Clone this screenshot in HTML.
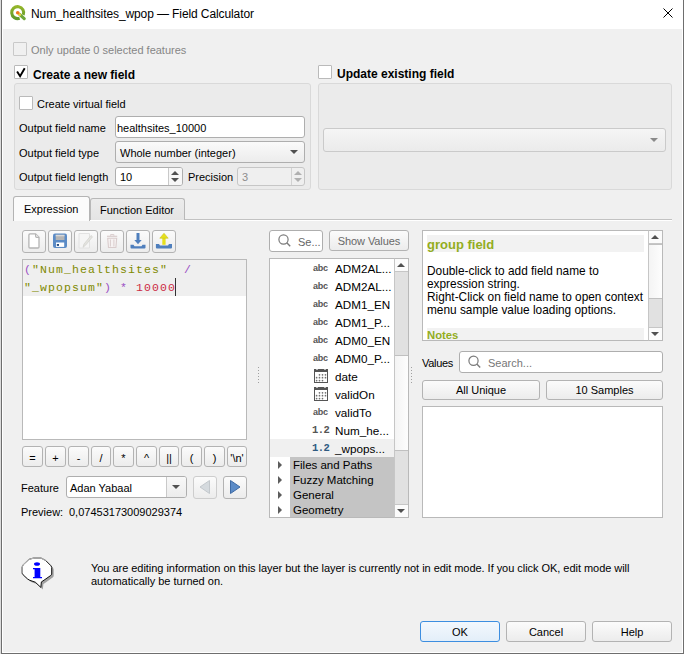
<!DOCTYPE html>
<html><head><meta charset="utf-8">
<style>
*{box-sizing:border-box;margin:0;padding:0}
html,body{width:684px;height:654px;overflow:hidden;background:#dcdcdc}
body{position:relative;font-family:"Liberation Sans",sans-serif;font-size:11px;color:#000}
.a{position:absolute}
.t{position:absolute;white-space:nowrap;line-height:13px}
.cb{position:absolute;width:13px;height:13px;border:1px solid #bababa;border-radius:1px;background:#fff}
.grp{position:absolute;border:1px solid #d9d9d9;border-radius:3px;background:#ebebeb}
.edit{position:absolute;border:1px solid #aeaeae;border-radius:3px;background:#fff}
.combo{position:absolute;border:1px solid #aeaeae;border-radius:3px;background:linear-gradient(#fafafa,#ececec)}
.btn{position:absolute;border:1px solid #b3b3b3;border-radius:3px;background:linear-gradient(#fbfbfb,#ececec);text-align:center}
.tri{position:absolute;width:0;height:0;border-left:4px solid transparent;border-right:4px solid transparent;border-top:4px solid #505050}
.tru{position:absolute;width:0;height:0;border-left:4px solid transparent;border-right:4px solid transparent;border-bottom:4px solid #505050}
.dots{position:absolute;width:1px;height:17px;background:repeating-linear-gradient(#a0a0a0 0 1px,transparent 1px 3px)}
</style></head><body>
<div class="a" style="left:1px;top:0px;width:683px;height:654px;border:1px solid #6e6e6e;border-top:none;background:#f0f0f0"></div>
<div class="a" style="left:2px;top:0px;width:681px;height:653px;border:1px solid #fff;border-top:none;"></div>
<div class="a" style="left:2px;top:0px;width:681px;height:29px;background:#fff"></div>
<svg class="a" style="left:6px;top:2px" width="24" height="24" viewBox="0 0 24 24">
<defs><linearGradient id="qg" x1="0" y1="0" x2="0" y2="1"><stop offset="0" stop-color="#93b52a"/><stop offset="1" stop-color="#5f9a2c"/></linearGradient></defs>
<path d="M13.65 16.27 A6 6 0 1 1 17.22 12.94" fill="none" stroke="url(#qg)" stroke-width="3.1"/>
<path d="M13.6 12.4 L18.2 16.6" stroke="#6fa83a" stroke-width="3.2" stroke-linecap="round"/>
<path d="M12.2 11.2 L14 12.8" stroke="#f0d040" stroke-width="2.4" stroke-linecap="round"/>
<circle cx="11.7" cy="10.8" r="1.8" fill="#f07820"/>
</svg>
<div class="t" style="left:31px;top:7px;font-size:12px;line-height:14px;letter-spacing:-0.1px">Num_healthsites_wpop — Field Calculator</div>
<svg class="a" style="left:662px;top:7px" width="12" height="12" viewBox="0 0 12 12"><path d="M1.5 1.5L10.5 10.5M10.5 1.5L1.5 10.5" stroke="#000" stroke-width="1"/></svg>
<div class="cb" style="left:13px;top:42px;width:14px;height:14px;background:#f0f0f0;border-color:#c9c9c9"></div>
<div class="t" style="left:31px;top:44px;color:#868686">Only update 0 selected features</div>
<div class="cb" style="left:14px;top:65px;width:14px;height:14px;"></div>
<svg class="a" style="left:15px;top:66px" width="12" height="12" viewBox="0 0 12 12"><path d="M2.1 5.6 L5.1 10.2 L9.7 2.2" fill="none" stroke="#000" stroke-width="1.9" stroke-linejoin="miter"/></svg>
<div class="t" style="left:33px;top:68px;font-weight:bold;font-size:12px;line-height:14px">Create a new field</div>
<div class="grp" style="left:14px;top:83px;width:297px;height:107px;"></div>
<div class="cb" style="left:19px;top:96px;width:14px;height:14px;"></div>
<div class="t" style="left:37px;top:98px;">Create virtual field</div>
<div class="t" style="left:19px;top:122px;">Output field name</div>
<div class="edit" style="left:115px;top:116px;width:190px;height:22px;"></div>
<div class="t" style="left:117px;top:122px;">healthsites_10000</div>
<div class="t" style="left:19px;top:147px;">Output field type</div>
<div class="combo" style="left:115px;top:141px;width:190px;height:22px;"></div>
<div class="t" style="left:120px;top:147px;">Whole number (integer)</div>
<div class="tri" style="left:290px;top:150px"></div>
<div class="t" style="left:19px;top:171px;">Output field length</div>
<div class="edit" style="left:115px;top:167px;width:68px;height:19px;"></div>
<div class="a" style="left:168px;top:168px;width:14px;height:17px;border-left:1px solid #c9c9c9;background:#f7f7f7;border-radius:0 2px 2px 0"></div>
<div class="tru" style="left:171px;top:171px"></div><div class="tri" style="left:171px;top:178px"></div>
<div class="t" style="left:120px;top:171px;">10</div>
<div class="t" style="left:188px;top:171px;">Precision</div>
<div class="edit" style="left:237px;top:167px;width:68px;height:19px;background:#efefef;border-color:#c6c6c6"></div>
<div class="a" style="left:291px;top:168px;width:13px;height:17px;border-left:1px solid #d2d2d2"></div>
<div class="tru" style="left:294px;top:171px;border-bottom-color:#b0b0b0"></div><div class="tri" style="left:294px;top:178px;border-top-color:#b0b0b0"></div>
<div class="t" style="left:242px;top:171px;color:#8d8d8d">3</div>
<div class="cb" style="left:318px;top:65px;width:14px;height:14px;"></div>
<div class="t" style="left:337px;top:67px;font-weight:bold;font-size:12px;line-height:14px">Update existing field</div>
<div class="grp" style="left:318px;top:83px;width:354px;height:107px;"></div>
<div class="combo" style="left:323px;top:128px;width:343px;height:24px;border-color:#cacaca;background:linear-gradient(#f5f5f5,#ebebeb)"></div>
<div class="tri" style="left:650px;top:138px;border-top-color:#8a8a8a"></div>
<div class="a" style="left:14px;top:219px;width:658px;height:1px;background:#c2c2c2"></div>
<div class="a" style="left:14px;top:220px;width:658px;height:1px;background:#fff"></div>
<div class="a" style="left:90px;top:198px;width:95px;height:22px;border:1px solid #b8b8b8;border-bottom:none;border-radius:3px 3px 0 0;background:linear-gradient(#ececec,#e4e4e4)"></div>
<div class="t" style="left:100px;top:204px;">Function Editor</div>
<div class="a" style="left:13px;top:196px;width:77px;height:25px;border:1px solid #b4b4b4;border-bottom:none;border-radius:3px 3px 0 0;background:#fbfbfb"></div>
<div class="t" style="left:24px;top:203px;">Expression</div>
<div class="btn" style="left:22px;top:230px;width:24px;height:23px;"></div>
<div class="btn" style="left:48px;top:230px;width:24px;height:23px;"></div>
<div class="btn" style="left:74px;top:230px;width:24px;height:23px;"></div>
<div class="btn" style="left:100px;top:230px;width:24px;height:23px;"></div>
<div class="btn" style="left:126px;top:230px;width:24px;height:23px;"></div>
<div class="btn" style="left:152px;top:230px;width:24px;height:23px;"></div>
<svg class="a" style="left:22px;top:230px" width="160" height="23" viewBox="0 0 160 23">
<path d="M8 3.9 H13.6 L17 7.3 V16.9 Q17 18 15.9 18 H8 Q6.9 18 6.9 16.9 V5 Q6.9 3.9 8 3.9 Z" fill="#fff" stroke="#b4b4b4" stroke-width="1.3"/>
<path d="M13.6 3.9 V6.2 Q13.6 7.3 14.7 7.3 H17" fill="#f0f0f0" stroke="#b4b4b4" stroke-width="1.2"/>
<rect x="31" y="3.5" width="14" height="14.5" rx="2" fill="#5b8bc6"/>
<rect x="33.7" y="4.8" width="8.8" height="5.2" fill="#b4b4b4"/>
<rect x="33.7" y="4.8" width="8.8" height="1.5" fill="#d8d8d8"/>
<rect x="34" y="12.5" width="8.2" height="4.4" fill="#fff"/>
<rect x="34.8" y="14" width="2.2" height="1.9" fill="#284d80"/>
<path d="M57 3.5 H67.5 V18 H57 Z" fill="#f5f5f5" stroke="#e2e2e2"/>
<path d="M61 17.3 L62 14 L69 5.5 L70.5 6.8 L63.5 15.3 Z" fill="#e4e4e0" stroke="#d0d0cc" stroke-width="0.7"/>
<path d="M85 6.3 H95.2" stroke="#d9cccc" stroke-width="1.2"/>
<path d="M88.6 5.7 V4.6 H91.9 V5.7" fill="none" stroke="#d9cccc" stroke-width="1"/>
<path d="M85.7 8.3 H94.7 L93.9 17.5 H86.5 Z" fill="#f6f2f2" stroke="#d9cccc" stroke-width="1.1"/>
<path d="M88.4 9.5 V16.5 M91.9 9.5 V16.5" stroke="#d9cccc" stroke-width="1"/>
<path d="M116 3 V10.5" stroke="#4f7fbd" stroke-width="3"/>
<path d="M112.3 10 H119.7 L116 14.2 Z" fill="#4f7fbd"/>
<path d="M108.5 14.7 H111.5 L112.5 16.2 H119.5 L120.5 14.7 H123.5 V17.6 Q123.5 18.6 122.5 18.6 H109.5 Q108.5 18.6 108.5 17.6 Z" fill="#4f7fbd"/>
<path d="M140.3 7.5 H143.6 V14.8 H140.3 Z" fill="#e6e01c"/>
<path d="M137.8 8.2 L142 3.3 L146.2 8.2 Z" fill="#e6e01c" stroke="#c8c21a" stroke-width="0.6"/>
<path d="M133.9 14.1 H137 L138 15.4 H146 L147 14.1 H150 V17.5 Q150 18.5 149 18.5 H134.9 Q133.9 18.5 133.9 17.5 Z" fill="#4f7fbd"/>
</svg>
<div class="a" style="left:22px;top:259px;width:225px;height:181px;border:1px solid #b9b9b9;background:#fff"></div>
<div class="a" style="left:23px;top:260px;width:223px;height:36px;background:#efefef"></div>
<div class="a" style="left:24px;top:261px;font-family:'Liberation Mono',monospace;font-size:11.5px;letter-spacing:1.1px;line-height:18px;white-space:pre;color:#808a00"><span style="color:#9a4ec4">(</span>"Num_healthsites"  <span style="color:#9a4ec4">/</span>
"_wpopsum"<span style="color:#9a4ec4">)</span> <span style="color:#9a4ec4">*</span> <span style="color:#cc2a44">10000</span></div>
<div class="a" style="left:175px;top:278px;width:1px;height:18px;background:#333"></div>
<div class="btn" style="left:22px;top:446px;width:21px;height:21px;line-height:20px;padding-top:1px">=</div>
<div class="btn" style="left:45px;top:446px;width:21px;height:21px;line-height:20px;padding-top:1px">+</div>
<div class="btn" style="left:68px;top:446px;width:21px;height:21px;line-height:20px;padding-top:1px">-</div>
<div class="btn" style="left:91px;top:446px;width:20px;height:21px;line-height:20px;padding-top:1px">/</div>
<div class="btn" style="left:113px;top:446px;width:21px;height:21px;line-height:20px;padding-top:1px">*</div>
<div class="btn" style="left:136px;top:446px;width:21px;height:21px;line-height:20px;padding-top:1px">^</div>
<div class="btn" style="left:159px;top:446px;width:20px;height:21px;line-height:20px;padding-top:1px">||</div>
<div class="btn" style="left:181px;top:446px;width:21px;height:21px;line-height:20px;padding-top:1px">(</div>
<div class="btn" style="left:204px;top:446px;width:21px;height:21px;line-height:20px;padding-top:1px">)</div>
<div class="btn" style="left:227px;top:446px;width:20px;height:21px;line-height:20px;padding-top:1px">'\n'</div>
<div class="t" style="left:21px;top:482px;">Feature</div>
<div class="combo" style="left:66px;top:476px;width:121px;height:22px;background:#fff"></div>
<div class="a" style="left:166px;top:477px;width:20px;height:20px;border-left:1px solid #c9c9c9;background:linear-gradient(#f8f8f8,#ececec);border-radius:0 2px 2px 0"></div>
<div class="tri" style="left:172px;top:485px"></div>
<div class="t" style="left:70px;top:482px;">Adan Yabaal</div>
<div class="btn" style="left:193px;top:476px;width:24px;height:23px;border-color:#cdcdcd"></div>
<div class="btn" style="left:223px;top:476px;width:24px;height:23px;"></div>
<svg class="a" style="left:193px;top:476px" width="54" height="23" viewBox="0 0 54 23">
<path d="M16.5 4.5 V17.5 L7 11 Z" fill="#d5dade" stroke="#c3c8cc"/>
<path d="M37.5 4.5 V17.5 L47 11 Z" fill="#5b8bc7" stroke="#3e6aa4"/>
</svg>
<div class="t" style="left:21px;top:506px;">Preview:</div>
<div class="t" style="left:69px;top:506px;">0,07453173009029374</div>
<div class="dots" style="left:258px;top:367px"></div>
<div class="dots" style="left:411px;top:367px"></div>
<div class="edit" style="left:269px;top:230px;width:54px;height:22px;"></div>
<svg class="a" style="left:276px;top:232px" width="18" height="18" viewBox="0 0 18 18"><circle cx="7.5" cy="7.5" r="4.6" fill="none" stroke="#7a7a7a" stroke-width="1.2"/><path d="M10.8 10.8 L14.2 14.2" stroke="#7a7a7a" stroke-width="1.4"/></svg>
<div class="t" style="left:298px;top:236px;color:#666">Se...</div>
<div class="btn" style="left:329px;top:230px;width:80px;height:21px;line-height:19px;color:#5e5e5e"></div>
<div class="t" style="left:329px;top:235px;width:80px;text-align:center;color:#686868;letter-spacing:-0.1px">Show Values</div>
<div class="a" style="left:269px;top:258px;width:140px;height:260px;border:1px solid #b9b9b9;background:#fff;overflow:hidden">
<div class="a" style="left:0px;top:180px;width:125px;height:18px;background:#f0f0f0"></div>
<div class="a" style="left:20px;top:198px;width:105px;height:61px;background:#c4c4c4"></div>
</div>
<div class="t" style="left:335px;top:261px;font-size:11.7px;line-height:15px">ADM2AL...</div>
<div class="t" style="left:313px;top:263px;font-size:9px;font-weight:bold;color:#555;line-height:10px;letter-spacing:-0.3px">abc</div>
<div class="t" style="left:335px;top:279px;font-size:11.7px;line-height:15px">ADM2AL...</div>
<div class="t" style="left:313px;top:281px;font-size:9px;font-weight:bold;color:#555;line-height:10px;letter-spacing:-0.3px">abc</div>
<div class="t" style="left:335px;top:297px;font-size:11.7px;line-height:15px">ADM1_EN</div>
<div class="t" style="left:313px;top:299px;font-size:9px;font-weight:bold;color:#555;line-height:10px;letter-spacing:-0.3px">abc</div>
<div class="t" style="left:335px;top:315px;font-size:11.7px;line-height:15px">ADM1_P...</div>
<div class="t" style="left:313px;top:317px;font-size:9px;font-weight:bold;color:#555;line-height:10px;letter-spacing:-0.3px">abc</div>
<div class="t" style="left:335px;top:333px;font-size:11.7px;line-height:15px">ADM0_EN</div>
<div class="t" style="left:313px;top:335px;font-size:9px;font-weight:bold;color:#555;line-height:10px;letter-spacing:-0.3px">abc</div>
<div class="t" style="left:335px;top:351px;font-size:11.7px;line-height:15px">ADM0_P...</div>
<div class="t" style="left:313px;top:353px;font-size:9px;font-weight:bold;color:#555;line-height:10px;letter-spacing:-0.3px">abc</div>
<div class="t" style="left:335px;top:369px;font-size:11.7px;line-height:15px">date</div>
<svg class="a" style="left:313px;top:368px" width="16" height="16" viewBox="0 0 16 16"><rect x="1.5" y="1.5" width="13" height="13" fill="#fff" stroke="#555"/><rect x="1" y="1" width="14" height="3" fill="#555"/><rect x="3" y="1" width="2" height="1" fill="#bbb"/><rect x="11" y="1" width="2" height="1" fill="#bbb"/><g fill="#707070"><circle cx="6.5" cy="6.8" r="0.85"/><circle cx="9.5" cy="6.8" r="0.85"/><circle cx="12.5" cy="6.8" r="0.85"/><circle cx="3.6" cy="9.7" r="0.85"/><circle cx="6.5" cy="9.7" r="0.85"/><circle cx="9.5" cy="9.7" r="0.85"/><circle cx="12.5" cy="9.7" r="0.85"/><circle cx="3.6" cy="12.6" r="0.85"/><circle cx="6.5" cy="12.6" r="0.85"/><circle cx="9.5" cy="12.6" r="0.85"/></g></svg>
<div class="t" style="left:335px;top:387px;font-size:11.7px;line-height:15px">validOn</div>
<svg class="a" style="left:313px;top:386px" width="16" height="16" viewBox="0 0 16 16"><rect x="1.5" y="1.5" width="13" height="13" fill="#fff" stroke="#555"/><rect x="1" y="1" width="14" height="3" fill="#555"/><rect x="3" y="1" width="2" height="1" fill="#bbb"/><rect x="11" y="1" width="2" height="1" fill="#bbb"/><g fill="#707070"><circle cx="6.5" cy="6.8" r="0.85"/><circle cx="9.5" cy="6.8" r="0.85"/><circle cx="12.5" cy="6.8" r="0.85"/><circle cx="3.6" cy="9.7" r="0.85"/><circle cx="6.5" cy="9.7" r="0.85"/><circle cx="9.5" cy="9.7" r="0.85"/><circle cx="12.5" cy="9.7" r="0.85"/><circle cx="3.6" cy="12.6" r="0.85"/><circle cx="6.5" cy="12.6" r="0.85"/><circle cx="9.5" cy="12.6" r="0.85"/></g></svg>
<div class="t" style="left:335px;top:405px;font-size:11.7px;line-height:15px">validTo</div>
<div class="t" style="left:313px;top:407px;font-size:9px;font-weight:bold;color:#555;line-height:10px;letter-spacing:-0.3px">abc</div>
<div class="t" style="left:335px;top:423px;font-size:11.7px;line-height:15px">Num_he...</div>
<div class="t" style="left:312px;top:425px;font-family:Liberation Mono,monospace;font-size:10.5px;font-weight:bold;color:#555;line-height:10px;letter-spacing:-0.6px">1.2</div>
<div class="t" style="left:335px;top:441px;font-size:11.7px;line-height:15px">_wpops...</div>
<div class="t" style="left:312px;top:443px;font-family:Liberation Mono,monospace;font-size:10.5px;font-weight:bold;color:#2f5a80;line-height:10px;letter-spacing:-0.6px">1.2</div>
<div class="t" style="left:293px;top:458px;font-size:11.5px;line-height:14px">Files and Paths</div>
<div class="a" style="left:278px;top:461px;width:0;height:0;border-top:4px solid transparent;border-bottom:4px solid transparent;border-left:4px solid #5c5c5c"></div>
<div class="t" style="left:293px;top:473px;font-size:11.5px;line-height:14px">Fuzzy Matching</div>
<div class="a" style="left:278px;top:476px;width:0;height:0;border-top:4px solid transparent;border-bottom:4px solid transparent;border-left:4px solid #5c5c5c"></div>
<div class="t" style="left:293px;top:488px;font-size:11.5px;line-height:14px">General</div>
<div class="a" style="left:278px;top:491px;width:0;height:0;border-top:4px solid transparent;border-bottom:4px solid transparent;border-left:4px solid #5c5c5c"></div>
<div class="t" style="left:293px;top:503px;font-size:11.5px;line-height:14px">Geometry</div>
<div class="a" style="left:278px;top:506px;width:0;height:0;border-top:4px solid transparent;border-bottom:4px solid transparent;border-left:4px solid #5c5c5c"></div>
<div class="a" style="left:394px;top:258px;width:15px;height:260px;border:1px solid #b9b9b9;border-left-color:#c6c6c6;background:#e1e1e1"></div>
<div class="a" style="left:395px;top:259px;width:13px;height:13px;background:#fbfbfb;border-bottom:1px solid #c6c6c6"></div>
<div class="tru" style="left:397px;top:263px"></div>
<div class="a" style="left:395px;top:355px;width:13px;height:96px;background:linear-gradient(90deg,#f4f4f4,#fdfdfd);border-top:1px solid #c0c0c0;border-bottom:1px solid #c0c0c0"></div>
<div class="a" style="left:395px;top:504px;width:13px;height:13px;background:#fbfbfb;border-top:1px solid #c6c6c6"></div>
<div class="tri" style="left:397px;top:509px"></div>
<div class="a" style="left:422px;top:230px;width:241px;height:111px;border:1px solid #b9b9b9;background:#fff;overflow:hidden">
<div class="a" style="left:4px;top:4px;width:217px;height:17px;background:#f2f2f2"></div>
<div class="t" style="left:4px;top:6px;font-size:13px;font-weight:bold;color:#93ad1e;line-height:16px">group field</div>
<div class="a" style="left:4px;top:34px;font-size:11.85px;line-height:13px;white-space:nowrap">Double-click to add field name to<br>expression string.<br>Right-Click on field name to open context<br>menu sample value loading options.</div>
<div class="a" style="left:4px;top:97px;width:217px;height:17px;background:#f2f2f2"></div>
<div class="t" style="left:4px;top:97px;font-size:11.3px;font-weight:bold;color:#93ad1e;line-height:14px">Notes</div>
</div>
<div class="a" style="left:648px;top:230px;width:15px;height:111px;border:1px solid #b9b9b9;border-left-color:#c6c6c6;background:#e1e1e1"></div>
<div class="a" style="left:649px;top:231px;width:13px;height:13px;background:#fbfbfb;border-bottom:1px solid #c6c6c6"></div>
<div class="tru" style="left:651px;top:235px"></div>
<div class="a" style="left:649px;top:244px;width:13px;height:55px;background:linear-gradient(90deg,#f4f4f4,#fdfdfd);border-top:1px solid #c0c0c0;border-bottom:1px solid #c0c0c0"></div>
<div class="a" style="left:649px;top:327px;width:13px;height:13px;background:#fbfbfb;border-top:1px solid #c6c6c6"></div>
<div class="tri" style="left:651px;top:332px"></div>
<div class="t" style="left:422px;top:357px;letter-spacing:-0.3px">Values</div>
<div class="edit" style="left:459px;top:351px;width:204px;height:22px;"></div>
<svg class="a" style="left:466px;top:353px" width="18" height="18" viewBox="0 0 18 18"><circle cx="7.5" cy="7.8" r="4.6" fill="none" stroke="#7a7a7a" stroke-width="1.2"/><path d="M10.8 11.1 L14.2 14.5" stroke="#7a7a7a" stroke-width="1.4"/></svg>
<div class="t" style="left:488px;top:357px;color:#777">Search...</div>
<div class="btn" style="left:422px;top:380px;width:118px;height:20px;line-height:18px"></div>
<div class="t" style="left:422px;top:384px;width:118px;text-align:center">All Unique</div>
<div class="btn" style="left:546px;top:380px;width:117px;height:20px;"></div>
<div class="t" style="left:546px;top:384px;width:117px;text-align:center">10 Samples</div>
<div class="a" style="left:422px;top:406px;width:241px;height:112px;border:1px solid #b9b9b9;background:#fff"></div>
<svg class="a" style="left:16px;top:552px" width="44" height="42" viewBox="0 0 44 42">
<path d="M14.9 9.4 L19.4 8.1 H27.1 L31.6 10.4 L37 15.8 L37.7 17.4 V24.2 L36.7 25.5 L29 30.9 L27.4 31.9 L26.8 37.4 L21.3 32.2 L15.8 30.3 L13.6 29 L9.1 24.8 L8.1 23.2 V17.1 L9.1 14.9 Z" fill="#a0a0a0"/>
<path d="M12.9 7.4 L17.4 6.1 H25.1 L29.6 8.4 L35 13.8 L35.7 15.4 V22.2 L34.7 23.5 L27 28.9 L25.4 29.9 L24.8 35.4 L19.3 30.2 L13.8 28.3 L11.6 27 L7.1 22.8 L6.1 21.2 V15.1 L7.1 12.9 Z" fill="#fff" stroke="#111" stroke-width="1"/>
<path d="M6.1 21.2 V15.1 L7.1 12.9 L12.9 7.4 L17.4 6.1 H25.1 L29.6 8.4" fill="none" stroke="#b4b4b4" stroke-width="1.1"/>
<ellipse cx="21" cy="12" rx="3" ry="1.8" fill="#0000ff"/>
<path d="M17 16 H24.3 V25 H26 V26.3 H17 V25 H18.6 V17.3 H17 Z" fill="#0000ff"/>
</svg>
<div class="t" style="left:91px;top:562px;letter-spacing:-0.04px">You are editing information on this layer but the layer is currently not in edit mode. If you click OK, edit mode will</div>
<div class="t" style="left:91px;top:575px;">automatically be turned on.</div>
<div class="btn" style="left:420px;top:621px;width:80px;height:21px;border-color:#3d8ee0;background:linear-gradient(#f3f8fd,#e3eef9)"></div>
<div class="t" style="left:420px;top:626px;width:80px;text-align:center">OK</div>
<div class="btn" style="left:506px;top:621px;width:80px;height:21px;"></div>
<div class="t" style="left:506px;top:626px;width:80px;text-align:center">Cancel</div>
<div class="btn" style="left:592px;top:621px;width:80px;height:21px;"></div>
<div class="t" style="left:592px;top:626px;width:80px;text-align:center">Help</div>
</body></html>
